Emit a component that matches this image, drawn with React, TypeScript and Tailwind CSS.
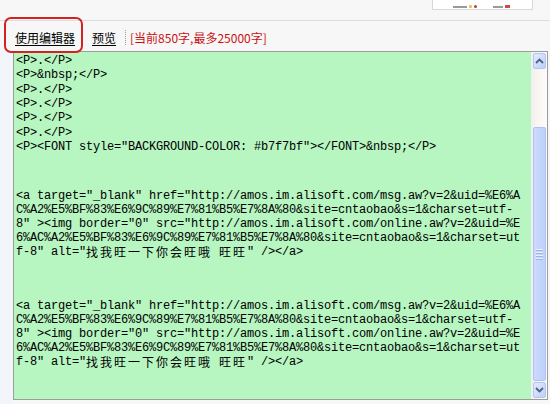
const mono = "font-['Liberation_Mono','DejaVu_Sans_Mono',monospace] text-[12px] tracking-[-0.2px] text-black";
const cjk = "font-['Noto_Sans_CJK_SC',sans-serif] text-[12px] leading-[12px] tracking-[2px]";

const topLines = [
  "<P>.</P>",
  "<P>&nbsp;</P>",
  "<P>.</P>",
  "<P>.</P>",
  "<P>.</P>",
  "<P>.</P>",
  '<P><FONT style="BACKGROUND-COLOR: #b7f7bf"></FONT>&nbsp;</P>',
];

const linkLines = [
  '<a target="_blank" href="http://amos.im.alisoft.com/msg.aw?v=2&uid=%E6%A',
  "C%A2%E5%BF%83%E6%9C%89%E7%81%B5%E7%8A%80&site=cntaobao&s=1&charset=utf-",
  '8" ><img border="0" src="http://amos.im.alisoft.com/online.aw?v=2&uid=%E',
  "6%AC%A2%E5%BF%83%E6%9C%89%E7%81%B5%E7%8A%80&site=cntaobao&s=1&charset=ut",
];

const LinkBlock = ({ className }: { className: string }) => (
  <div className={className}>
    {linkLines.map((l, i) => (
      <div key={i} className="h-[14px] leading-[14px] whitespace-pre">{l}</div>
    ))}
    <div className="h-[14px] leading-[14px] whitespace-pre flex items-center">
      <span>f-8" alt="</span>
      <span className={cjk}>找我旺一下你会旺哦</span>
      <span> </span>
      <span className={cjk}>旺旺</span>
      <span>" /&gt;&lt;/a&gt;</span>
    </div>
  </div>
);

const Arrow = ({ down }: { down?: boolean }) => (
  <svg width="9" height="6" viewBox="0 0 9 6" className={down ? "rotate-180" : ""}>
    <path d="M1 5 L4.5 1.5 L8 5" fill="none" stroke="#4d6185" strokeWidth="1.8" />
  </svg>
);

const ScrollBar = () => (
  <div className="w-[16px] flex flex-col bg-gradient-to-r from-[#f4f1ec] to-[#fefcfb] border-l border-[#eef0f4]">
    <div className="mx-[1px] mt-[1px] h-[16px] rounded-[2px] border border-[#b3c6f2] bg-gradient-to-br from-[#e3ecfd] to-[#bccffa] flex items-center justify-center">
      <Arrow />
    </div>
    <div className="flex-1 flex flex-col pt-[58px] pb-[1px]">
      <div className="flex-1 mx-[1px] rounded-[2px] border border-[#aec2f3] bg-gradient-to-r from-[#cbdafd] to-[#bed0fb] flex flex-col items-center justify-center gap-[1px]">
        {[0, 1, 2, 3].map((i) => (
          <div key={i} className="w-[7px] h-[1px] bg-[#e9f0fe] border-b border-[#9fb4e6] box-content" />
        ))}
      </div>
    </div>
    <div className="mx-[1px] mb-[1px] h-[16px] rounded-[2px] border border-[#b3c6f2] bg-gradient-to-br from-[#e3ecfd] to-[#bccffa] flex items-center justify-center">
      <Arrow down />
    </div>
  </div>
);

export default function App() {
  return (
    <div className="relative w-[550px] h-[404px] overflow-hidden bg-[#f7f7f7] font-['Noto_Sans_CJK_SC',sans-serif]">
      <div className="h-[21px] border-b border-[#dddddd]">
        <div className="ml-[432px] w-[101px] h-[10px] border border-t-0 border-[#d8d8d8] bg-white flex items-end gap-[2px] pl-[20px] pb-[1px]">
          <div className="w-[14px] h-[2px] bg-[#9a9a9a]" />
          <div className="w-[3px] h-[3px] rounded-full bg-[#f0b830]" />
          <div className="w-[3px] h-[3px] rounded-full bg-[#b04040]" />
          <div className="ml-[14px] w-[10px] h-[2px] bg-[#9a9a9a]" />
          <div className="w-[5px] h-[3px] bg-[#d04848]" />
        </div>
      </div>

      <div className="h-[30px] flex items-center pl-[15px] pt-[3px] text-[12px] leading-[14px]">
        <span className="underline underline-offset-[2px] text-black">使用编辑器</span>
        <span className="ml-[17px] underline underline-offset-[2px] text-black">预览</span>
        <span className="ml-[9px] h-[15px] border-l border-dotted border-[#999999]" />
        <span className="ml-[4px] text-[#cc1111]">[当前850字,最多25000字]</span>
      </div>

      <div className="flex h-[353px]">
        <div className="w-[13px] bg-[#f2f6fb]" />
        <div className="w-[535px] h-[349px] border border-[#9c9c9c] bg-[#b7f5c1] flex">
          <div className={"flex-1 pl-[2px] pt-[2px] " + mono}>
            {topLines.map((l, i) => (
              <div key={i} className="h-[14.33px] leading-[14.33px] whitespace-pre">{l}</div>
            ))}
            <LinkBlock className="mt-[35px]" />
            <LinkBlock className="mt-[40px]" />
          </div>
          <ScrollBar />
        </div>
        <div className="flex-1" />
      </div>

      <div className="absolute left-[4px] top-[17px] w-[79px] h-[36px] rounded-[7px] border-2 border-[#d42222]" />
    </div>
  );
}
